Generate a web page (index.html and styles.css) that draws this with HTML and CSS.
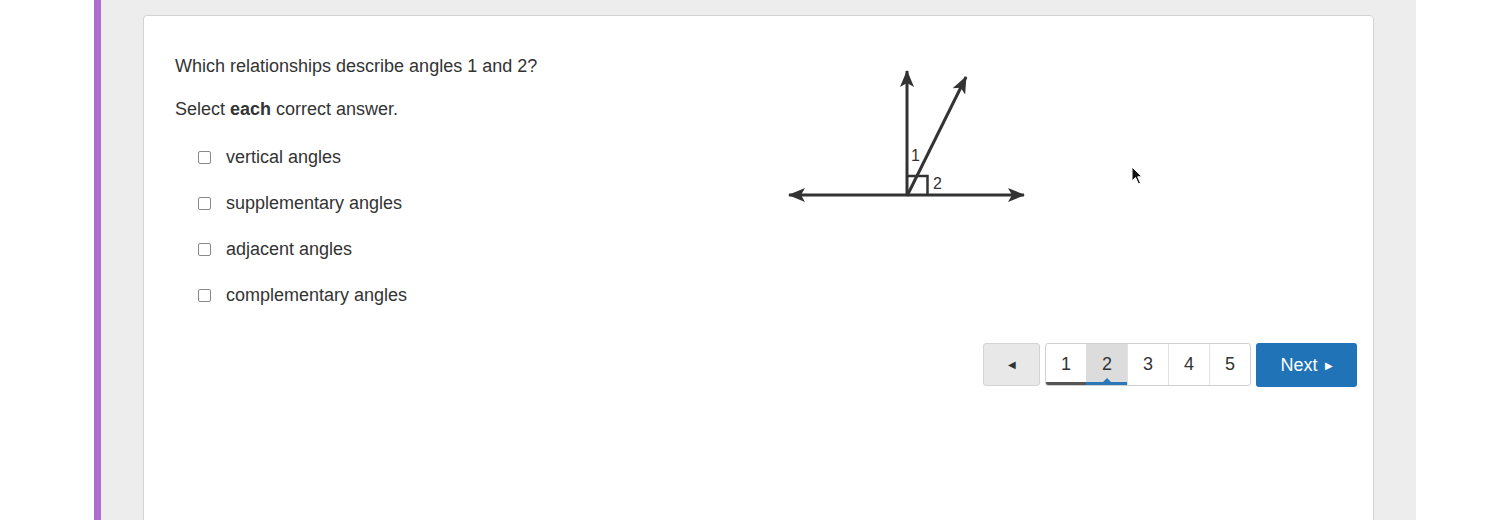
FILE: index.html
```html
<!DOCTYPE html>
<html lang="en">
  <head>
    <meta charset="UTF-8" />
    <meta name="viewport" content="width=device-width, initial-scale=1.0" />
    <title>Angle Relationships</title>
    <link rel="stylesheet" href="styles.css">
  </head>
  <body>
    <div class="shell">
      <section class="card">
        <div class="item">
          <div class="prompt">
            <p class="question">Which relationships describe angles 1 and 2?</p>
            <p class="instruction">Select <strong>each</strong> correct answer.</p>
            <ul class="choices">
              <li><input type="checkbox" id="c1" /><label for="c1">vertical angles</label></li>
              <li><input type="checkbox" id="c2" /><label for="c2">supplementary angles</label></li>
              <li><input type="checkbox" id="c3" /><label for="c3">adjacent angles</label></li>
              <li><input type="checkbox" id="c4" /><label for="c4">complementary angles</label></li>
            </ul>
          </div>
          <div class="figure">
            <svg width="270" height="160" viewBox="770 53 270 160">
              <defs>
                <marker id="head" markerUnits="userSpaceOnUse" markerWidth="18" markerHeight="16" refX="16" refY="8" orient="auto-start-reverse">
                  <path d="M17 8 L0 1 L4 8 L0 15 Z" fill="#333" />
                </marker>
              </defs>
              <g stroke="#333" stroke-width="3" fill="none">
                <line x1="789" y1="195" x2="1024" y2="195" marker-start="url(#head)" marker-end="url(#head)" />
                <line x1="907" y1="196" x2="907" y2="71" marker-end="url(#head)" />
                <line x1="907" y1="196" x2="966" y2="77" marker-end="url(#head)" />
                <path d="M907 176 H927.5 V195" stroke-width="2.5" />
              </g>
              <text x="911" y="161" class="fig-label">1</text>
              <text x="933" y="189" class="fig-label">2</text>
            </svg>
          </div>
        </div>

        <nav class="pager">
          <button class="pager-prev" type="button">&#9664;</button>
          <div class="pager-pages">
            <span class="page-cell done">1</span>
            <span class="page-cell current">2</span>
            <span class="page-cell">3</span>
            <span class="page-cell">4</span>
            <span class="page-cell">5</span>
          </div>
          <button class="pager-next" type="button">Next <span class="next-arrow">&#9654;</span></button>
        </nav>
      </section>
    </div>

    <svg class="cursor" width="14" height="20" viewBox="0 0 14 20">
      <path d="M1 1 L1 15 L4.5 11.5 L7.5 18 L9.5 17 L6.7 10.8 L11 10.8 Z" fill="#111" stroke="#fff" stroke-width="1" />
    </svg>
  </body>
</html>
```

FILE: styles.css
```css
html,
body {
  margin: 0;
  padding: 0;
  height: 520px;
  overflow: hidden;
}
body {
  font-family: 'Liberation Sans', Arial, Helvetica, sans-serif;
  background-color: #fff;
  color: #333;
  position: relative;
}
.shell {
  margin-left: 94px;
  width: 1322px;
  height: 520px;
  border-left: 7px solid #b26ccf;
  background-color: #ededed;
  padding: 15px 42px 0 42px;
  box-sizing: border-box;
  overflow: hidden;
}
.card {
  background-color: #fff;
  border: 1px solid #d3d3d3;
  border-radius: 4px;
  height: 540px;
  padding: 37px 16px 0 31px;
  box-sizing: border-box;
}
.item {
  display: flex;
  align-items: flex-start;
}
.prompt {
  flex: 0 0 595px;
}
.question,
.instruction {
  margin: 0;
  font-size: 18px;
  line-height: 26px;
}
.instruction {
  margin-top: 17px;
}
.instruction strong {
  font-weight: 700;
}
.choices {
  list-style: none;
  margin: 22px 0 0 0;
  padding: 0 0 0 23px;
}
.choices li {
  display: flex;
  align-items: center;
  gap: 15px;
  font-size: 18px;
  line-height: 26px;
}
.choices li + li {
  margin-top: 20px;
}
.choices input {
  appearance: none;
  -webkit-appearance: none;
  margin: 0;
  width: 13px;
  height: 13px;
  border: 1px solid #8a8a8a;
  border-radius: 2px;
  background: #fff;
  box-sizing: border-box;
}
.figure svg {
  display: block;
}
.fig-label {
  font-family: 'Liberation Sans', Arial, sans-serif;
  font-size: 16px;
  fill: #333;
}
.pager {
  display: flex;
  justify-content: flex-end;
  margin-top: 35px;
  height: 44px;
}
.pager button {
  font-family: inherit;
  cursor: pointer;
}
.pager-prev {
  width: 57px;
  height: 43px;
  margin-right: 5px;
  background-color: #e8e8e8;
  border: 1px solid #d4d4d4;
  border-radius: 3px;
  color: #333;
  font-size: 10px;
  padding: 0;
}
.pager-pages {
  display: flex;
  height: 43px;
  border: 1px solid #d0d0d0;
  border-radius: 3px;
  box-sizing: border-box;
  overflow: hidden;
}
.page-cell {
  position: relative;
  width: 40px;
  text-align: center;
  font-size: 18px;
  line-height: 41px;
  color: #333;
}
.page-cell + .page-cell {
  border-left: 1px solid #e2e2e2;
}
.page-cell.current {
  background-color: #dcdcdc;
  border-left-color: #dcdcdc;
}
.page-cell.done::after,
.page-cell.current::after {
  content: '';
  position: absolute;
  left: 0;
  right: -1px;
  bottom: 0;
  height: 3px;
  background-color: #555;
}
.page-cell.current::after {
  left: -1px;
  right: 0;
  background-color: #2b78b8;
}
.page-cell.current::before {
  content: '';
  position: absolute;
  left: 50%;
  bottom: 3px;
  margin-left: -4px;
  border-left: 4px solid transparent;
  border-right: 4px solid transparent;
  border-bottom: 4px solid #2b78b8;
}
.pager-next {
  width: 101px;
  height: 44px;
  margin-left: 5px;
  background-color: #1f73b6;
  border: none;
  border-radius: 3px;
  color: #fff;
  font-size: 18px;
  padding: 0;
}
.next-arrow {
  font-size: 10px;
  vertical-align: 2px;
  margin-left: 2px;
}
.cursor {
  position: absolute;
  left: 1131px;
  top: 166px;
}
```
